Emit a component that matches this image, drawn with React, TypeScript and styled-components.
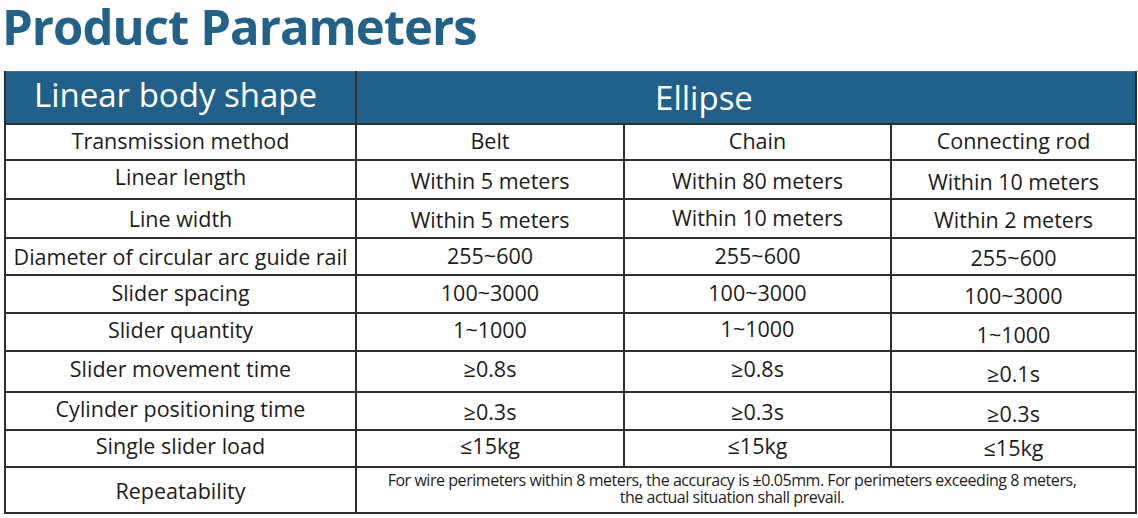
import React from "react";
import styled, { createGlobalStyle } from "styled-components";

const Global = createGlobalStyle`
  html, body { margin: 0; padding: 0; background: #ffffff; }
  body { font-family: "Open Sans", "Noto Sans", sans-serif; color: #1c1c1c; }
`;

const Page = styled.div`
  width: 1138px;
  height: 518px;
  overflow: hidden;
  background: #fff;
`;

const Title = styled.h1`
  margin: 0;
  height: 71px;
  padding-left: 2px;
  font-family: "Open Sans", "Noto Sans", sans-serif;
  font-weight: 700;
  font-size: 49px;
  line-height: 52px;
  letter-spacing: -0.95px;
  color: #21628b;
`;

const Grid = styled.div`
  margin-left: 4px;
  width: 1133px;
  display: grid;
  grid-template-columns: 349px 266px 265px 243px;
  grid-template-rows: 52px 34px 37px 37px 35px 36px 36px 39px 36px 35px 44px;
  gap: 2px;
  background: #2e2e2e;
  border: 2px solid #2e2e2e;
  border-top: none;
  box-sizing: border-box;
`;

const shiftPad = (s?: number) => {
  const v = s ?? 0;
  return `padding-top: ${v > 0 ? v * 2 : 0}px; padding-bottom: ${v < 0 ? -v * 2 : 0}px;`;
};

const HeadCell = styled.div<{ $span?: number; $pr?: number; $shift?: number }>`
  grid-column: span ${(p) => p.$span ?? 1};
  background: #21608a;
  border-top: 1px solid #5f6d78;
  color: #ffffff;
  font-size: 33px;
  display: flex;
  align-items: center;
  justify-content: center;
  padding-right: ${(p) => p.$pr ?? 0}px;
  ${(p) => shiftPad(p.$shift)}
  box-sizing: border-box;
  white-space: nowrap;
`;

const Cell = styled.div<{ $span?: number; $shift?: number }>`
  grid-column: span ${(p) => p.$span ?? 1};
  background: #ffffff;
  display: flex;
  align-items: center;
  justify-content: center;
  text-align: center;
  font-size: 21.5px;
  ${(p) => shiftPad(p.$shift)}
  box-sizing: border-box;
  white-space: nowrap;
`;

const Note = styled.div`
  font-size: 16px;
  line-height: 17px;
  letter-spacing: -0.45px;
  text-align: center;
  white-space: normal;
  padding-right: 28px;
`;

type Row = { label: string; shift: number; values: [string, number][] };

const rows: Row[] = [
  { label: "Transmission method", shift: -2, values: [["Belt", -2], ["Chain", -2], ["Connecting rod", -2]] },
  { label: "Linear length", shift: -3, values: [["Within 5 meters", 1], ["Within 80 meters", 1], ["Within 10 meters", 2]] },
  { label: "Line width", shift: 0, values: [["Within 5 meters", 1], ["Within 10 meters", -1], ["Within 2 meters", 1]] },
  { label: "Diameter of circular arc guide rail", shift: 0, values: [["255~600", -1], ["255~600", -1], ["255~600", 1]] },
  { label: "Slider spacing", shift: -2, values: [["100~3000", -2], ["100~3000", -2], ["100~3000", 1]] },
  { label: "Slider quantity", shift: -3, values: [["1~1000", -3], ["1~1000", -4], ["1~1000", 2]] },
  { label: "Slider movement time", shift: -3, values: [["≥0.8s", -3], ["≥0.8s", -3], ["≥0.1s", 2]] },
  { label: "Cylinder positioning time", shift: -3, values: [["≥0.3s", 0], ["≥0.3s", 0], ["≥0.3s", 2]] },
  { label: "Single slider load", shift: -3, values: [["≤15kg", -3], ["≤15kg", -3], ["≤15kg", -1]] },
];

export default function App() {
  return (
    <Page>
      <Global />
      <Title>Product Parameters</Title>
      <Grid>
        <HeadCell $shift={-3} $pr={10}>
          Linear body shape
        </HeadCell>
        <HeadCell $span={3} $pr={84}>
          Ellipse
        </HeadCell>
        {rows.map((r) => (
          <React.Fragment key={r.label}>
            <Cell $shift={r.shift}>{r.label}</Cell>
            {r.values.map(([v, s], i) => (
              <Cell key={i} $shift={s}>
                {v}
              </Cell>
            ))}
          </React.Fragment>
        ))}
        <Cell>Repeatability</Cell>
        <Cell $span={3} $shift={-1}>
          <Note>
            For wire perimeters within 8 meters, the accuracy is ±0.05mm. For perimeters exceeding 8 meters,
            <br />
            the actual situation shall prevail.
          </Note>
        </Cell>
      </Grid>
    </Page>
  );
}
